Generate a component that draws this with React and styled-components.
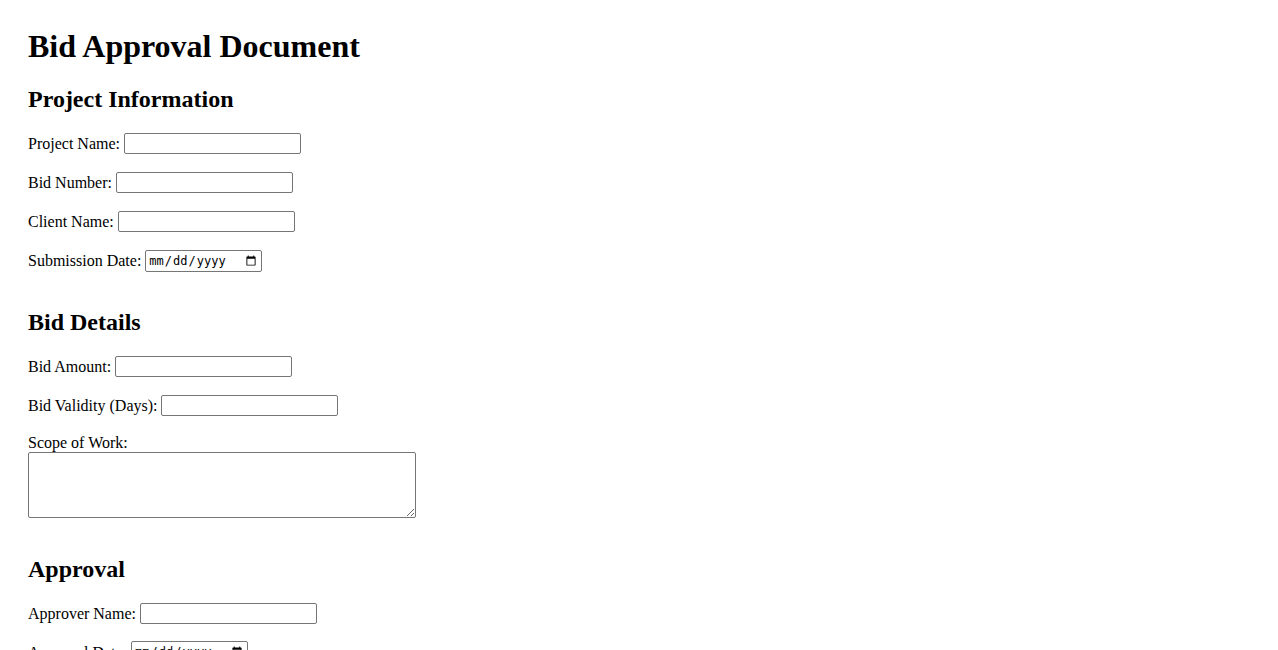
import React from 'react';
import styled, { createGlobalStyle } from 'styled-components';

const GlobalStyle = createGlobalStyle`
  html, body {
    margin: 0;
    padding: 0;
    background: #ffffff;
  }
  body {
    font-family: "Liberation Serif", "Times New Roman", serif;
    font-size: 16px;
    color: #000000;
  }
`;

const Page = styled.div`
  padding: 28px 28px 40px;
`;

const Title = styled.h1`
  font-size: 32px;
  font-weight: 700;
  margin: 0 0 21.44px;
`;

const Section = styled.section`
  display: flow-root;

  & + & {
    padding-top: 19.92px;
  }
`;

const SectionTitle = styled.h2`
  font-size: 24px;
  font-weight: 700;
  margin: 0 0 19.92px;
`;

const Row = styled.div`
  height: 21px;
  line-height: 21px;
  margin-bottom: 18px;
  display: flex;
  align-items: center;
`;

const StackRow = styled.div`
  display: flex;
  flex-direction: column;
  align-items: flex-start;
  margin-bottom: 18.5px;
  line-height: 17.5px;
`;

const Label = styled.label`
  margin-right: 4px;
`;

const TextInput = styled.input`
  font-family: "Liberation Sans", Arial, sans-serif;
  font-size: 13.33px;
  width: 177px;
  height: 21px;
  box-sizing: border-box;
  margin: 0;
  padding: 1px 2px;
  border: 1px solid #767676;
  border-radius: 2px;
  background: #ffffff;
`;

const DateInput = styled(TextInput)`
  font-family: "DejaVu Sans Mono", "Liberation Mono", monospace;
  font-size: 12px;
  width: 117px;
  height: 22px;
`;

const TextArea = styled.textarea`
  display: block;
  width: 388px;
  height: 66px;
  box-sizing: border-box;
  margin: 0;
  border: 1px solid #767676;
  border-radius: 2px;
  font-family: "Liberation Mono", monospace;
  font-size: 13.33px;
`;

const Field = ({ label, type = 'text' }) => (
  <Row>
    <Label>{label}</Label>
    {type === 'date' ? <DateInput type="date" /> : <TextInput type={type} />}
  </Row>
);

export default function App() {
  return (
    <>
      <GlobalStyle />
      <Page>
        <Title>Bid Approval Document</Title>

        <Section>
          <SectionTitle>Project Information</SectionTitle>
          <Field label="Project Name:" />
          <Field label="Bid Number:" />
          <Field label="Client Name:" />
          <Field label="Submission Date:" type="date" />
        </Section>

        <Section>
          <SectionTitle>Bid Details</SectionTitle>
          <Field label="Bid Amount:" type="number" />
          <Field label="Bid Validity (Days):" type="number" />
          <StackRow>
            <label>Scope of Work:</label>
            <TextArea />
          </StackRow>
        </Section>

        <Section>
          <SectionTitle>Approval</SectionTitle>
          <Field label="Approver Name:" />
          <Field label="Approval Date:" type="date" />
        </Section>
      </Page>
    </>
  );
}
